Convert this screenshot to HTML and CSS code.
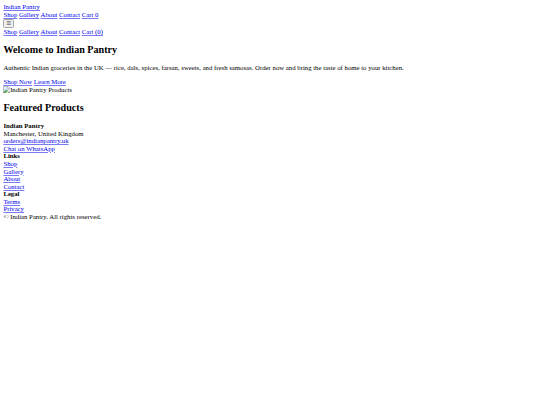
FILE: index.html
```html
<!DOCTYPE html>
<html lang="en">
<head>
<meta charset="utf-8">
<title>Indian Pantry</title>
<link rel="stylesheet" href="styles.css">
</head>
<body>
<header class="site-header">
  <div class="brand"><a href="#">Indian Pantry</a></div>
  <nav class="nav-desktop"><a href="#">Shop</a> <a href="#">Gallery</a> <a href="#">About</a> <a href="#">Contact</a> <a href="#">Cart <span class="cart-count">0</span></a></nav>
  <button class="menu-toggle" type="button">☰</button>
  <nav class="nav-mobile"><a href="#">Shop</a> <a href="#">Gallery</a> <a href="#">About</a> <a href="#">Contact</a> <a href="#">Cart (0)</a></nav>
</header>
<main>
  <section class="hero">
    <h1>Welcome to Indian Pantry</h1>
    <p>Authentic Indian groceries in the UK — rice, dals, spices, farsan, sweets, and fresh samosas. Order now and bring the taste of home to your kitchen.</p>
    <div class="hero-actions"><a href="#">Shop Now</a> <a href="#">Learn More</a></div>
    <div class="hero-media"><img class="hero-img" src="hero-products.jpg" alt="Indian Pantry Products"></div>
  </section>
  <section class="featured">
    <h2>Featured Products</h2>
  </section>
</main>
<footer class="site-footer">
  <div class="footer-col">
    <strong>Indian Pantry</strong>
    <div>Manchester, United Kingdom</div>
    <div><a href="#">orders@indianpantry.uk</a></div>
    <div><a href="#">Chat on WhatsApp</a></div>
  </div>
  <div class="footer-col">
    <strong>Links</strong>
    <div><a href="#">Shop</a></div>
    <div><a href="#">Gallery</a></div>
    <div><a href="#">About</a></div>
    <div><a href="#">Contact</a></div>
  </div>
  <div class="footer-col">
    <strong>Legal</strong>
    <div><a href="#">Terms</a></div>
    <div><a href="#">Privacy</a></div>
  </div>
  <div class="copyright">© Indian Pantry. All rights reserved.</div>
</footer>
</body>
</html>
```

FILE: styles.css
```css
body {
  margin: 3.375px;
  font-family: "Liberation Serif", "Times New Roman", serif;
  font-size: 6.75px;
  line-height: 7.6px;
  color: #000;
}
a {
  color: #0000ee;
  text-decoration-thickness: 0.5px;
  text-decoration-color: #7a7af5;
  text-underline-offset: 1px;
}
.menu-toggle {
  display: block;
  width: 11px;
  height: 9.5px;
  padding: 0;
  font-family: "DejaVu Sans", sans-serif;
  font-size: 5.6px;
  line-height: 7px;
  text-align: center;
  border: 1px solid #a5a5a5;
  border-radius: 1.5px;
  background: #f0f0f0;
  color: #333;
}
h1,
h2 {
  font-size: 10.125px;
  line-height: 11.6px;
  margin: 8.4px 0;
}
p {
  margin: 6.75px 0;
}
.footer-col strong {
  display: block;
}
.hero-media {
  height: 7.6px;
}
.hero-img {
  zoom: 0.421875;
  font-size: 16px;
  line-height: 18px;
  vertical-align: top;
}
```
